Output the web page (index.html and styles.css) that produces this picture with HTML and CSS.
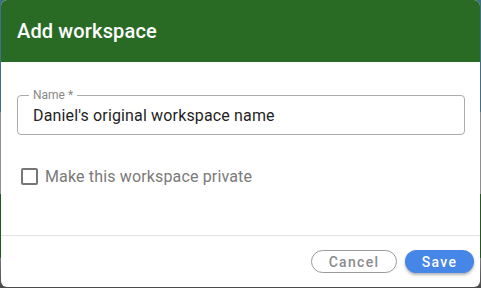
FILE: index.html
```html
<!DOCTYPE html>
<html lang="en">
<head>
<meta charset="utf-8">
<title>Add workspace</title>
<link rel="stylesheet" href="styles.css">
</head>
<body>
<div class="dialog">
  <div class="dialog-header">
    <h1 class="dialog-title">Add workspace</h1>
  </div>
  <div class="dialog-body">
    <div class="field">
      <span class="field-label">Name *</span>
      <span class="field-value">Daniel's original workspace name</span>
    </div>
    <label class="check-row">
      <span class="check-box"></span>
      <span class="check-text">Make this workspace private</span>
    </label>
  </div>
  <div class="dialog-footer">
    <button class="btn btn-outline">Cancel</button>
    <button class="btn btn-primary">Save</button>
  </div>
</div>
</body>
</html>
```
FILE: styles.css
```css
html, body {
  margin: 0;
  padding: 0;
  height: 100%;
}
body {
  background: linear-gradient(to bottom, #3f7088 0, #3f7088 112px, #8e8e8e 112px, #8e8e8e 194px, #1f5a1c 194px, #1f5a1c 258px, #7a7a7a 258px, #4a4a4a 100%);
  font-family: Roboto, "Liberation Sans", sans-serif;
  overflow: hidden;
}
.dialog {
  margin-left: 1px;
  width: 479px;
  height: 287px;
  background: #ffffff;
  border-radius: 6px;
  overflow: hidden;
  display: flex;
  flex-direction: column;
}
.dialog-header {
  height: 62px;
  flex: none;
  background: #296b25;
  display: flex;
  align-items: center;
  padding-left: 16px;
}
.dialog-title {
  margin: 0;
  color: #ffffff;
  font-size: 20px;
  font-weight: 500;
  letter-spacing: 0.15px;
}
.dialog-body {
  flex: 1;
  padding: 33px 15px 0 16px;
  border-bottom: 1px solid #e2e2e2;
}
.field {
  position: relative;
  height: 38px;
  border: 1px solid #ababab;
  border-radius: 4px;
  display: flex;
  align-items: center;
  padding-left: 15px;
}
.field-label {
  position: absolute;
  top: -8px;
  left: 11px;
  padding: 0 4px;
  background: #ffffff;
  color: #888888;
  font-size: 12px;
  line-height: 14px;
}
.field-value {
  color: #1f1f1f;
  font-size: 16px;
  letter-spacing: 0.15px;
  padding-top: 1px;
}
.check-row {
  margin-top: 33px;
  margin-left: 4px;
  display: flex;
  align-items: center;
  gap: 7px;
  height: 17px;
}
.check-box {
  width: 13px;
  height: 13px;
  border: 2px solid #767676;
  border-radius: 2px;
  flex: none;
}
.check-text {
  color: #7a7a7a;
  font-size: 16px;
  letter-spacing: 0.15px;
}
.dialog-footer {
  height: 51px;
  flex: none;
  display: flex;
  justify-content: flex-end;
  align-items: flex-start;
  gap: 8px;
  padding: 14px 6px 0 0;
  box-sizing: border-box;
}
.btn {
  height: 23px;
  border-radius: 12px;
  font-family: Roboto, "Liberation Sans", sans-serif;
  font-size: 14px;
  font-weight: 500;
  letter-spacing: 1.3px;
  padding: 0;
  cursor: pointer;
}
.btn-outline {
  width: 86px;
  background: #ffffff;
  border: 1px solid #9a9a9a;
  color: #8c8c8c;
}
.btn-primary {
  width: 69px;
  background: #4586e6;
  border: none;
  color: #ffffff;
  box-shadow: 0 2px 3px rgba(0, 0, 0, 0.3);
}
```
